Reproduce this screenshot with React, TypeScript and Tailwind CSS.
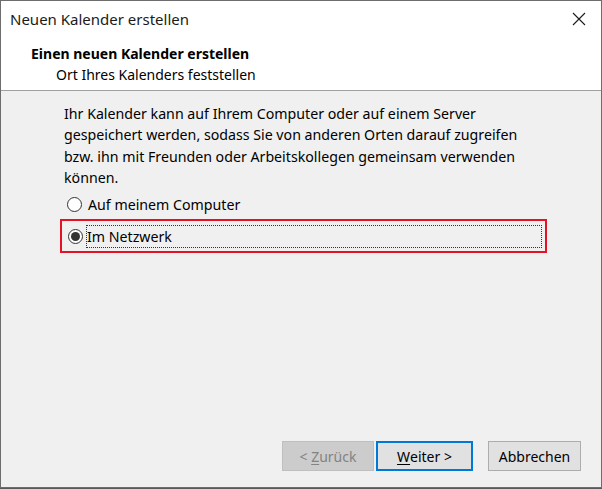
import React, { useState } from 'react';

const font = { fontFamily: '"Noto Sans", "Liberation Sans", sans-serif' };

function Radio({ checked }: { checked: boolean }) {
  return (
    <span className="flex h-[15px] w-[15px] shrink-0 items-center justify-center rounded-full border border-[#333333] bg-white">
      {checked && <span className="h-[9px] w-[9px] rounded-full bg-[#333333]" />}
    </span>
  );
}

export default function App() {
  const [choice, setChoice] = useState<'local' | 'network'>('network');

  return (
    <div className="h-[489px] w-[602px] bg-[#5a5a5a] text-black" style={font}>
      <div className="flex h-[488px] w-[602px] flex-col border border-[#6d6d6d] bg-white">
        {/* title bar */}
        <div className="flex h-[36px] shrink-0 items-center justify-between pl-[9px] pr-[14px] text-[15px] text-[#1a1a1a]">
          <span>Neuen Kalender erstellen</span>
          <svg width="14" height="14" viewBox="0 0 14 14" className="mr-[1px]">
            <path d="M1 1 L13 13 M13 1 L1 13" stroke="#1a1a1a" strokeWidth="1.1" />
          </svg>
        </div>

        {/* header */}
        <div className="flex h-[54px] shrink-0 flex-col border-b border-[#a0a0a0] pl-[30px] pt-[6px]">
          <div className="text-[14px] font-bold leading-[21px]">Einen neuen Kalender erstellen</div>
          <div className="pl-[25px] text-[14px] leading-[21px]">Ort Ihres Kalenders feststellen</div>
        </div>

        {/* body */}
        <div className="flex flex-1 flex-col bg-[#f0f0f0]">
          <div className="flex flex-1 flex-col pl-[63px] pr-[40px] pt-[12px]">
            <p className="w-[480px] text-[14.2px] leading-[21.3px]">
              Ihr Kalender kann auf Ihrem Computer oder auf einem Server gespeichert werden, sodass Sie von anderen
              Orten darauf zugreifen bzw. ihn mit Freunden oder Arbeitskollegen gemeinsam verwenden können.
            </p>

            <button
              className="mt-[4px] flex h-[24px] items-center gap-[6px] text-left text-[14.2px]"
              onClick={() => setChoice('local')}
            >
              <span className="ml-[3px]">
                <Radio checked={choice === 'local'} />
              </span>
              <span>Auf meinem Computer</span>
            </button>

            <div className="-ml-[4px] mt-[3px] w-[487px] border-2 border-[#e81123] p-[3px]">
              <button
                className="flex h-[24px] w-full items-center text-left text-[14.2px]"
                onClick={() => setChoice('network')}
              >
                <span className="ml-[3px] mr-[3px]">
                  <Radio checked={choice === 'network'} />
                </span>
                <span className="flex h-[23px] flex-1 items-center border border-dotted border-[#333333]">
                  Im Netzwerk
                </span>
              </button>
            </div>
          </div>

          {/* buttons */}
          <div className="flex shrink-0 justify-end gap-[2px] pb-[16px] pr-[20px] text-[14px]">
            <button
              disabled
              className="flex h-[30px] w-[92px] items-center justify-center border border-[#bfbfbf] bg-[#cccccc] text-[#838383]"
            >
              &lt;&nbsp;<span className="underline underline-offset-2">Z</span>urück
            </button>
            <button className="flex h-[30px] w-[97px] items-center justify-center border-2 border-[#0078d7] bg-[#e1e1e1]">
              <span className="underline underline-offset-2">W</span>eiter &gt;
            </button>
            <button className="ml-[13px] flex h-[30px] w-[93px] items-center justify-center border border-[#adadad] bg-[#e1e1e1]">
              Abbrechen
            </button>
          </div>
        </div>
      </div>
    </div>
  );
}
